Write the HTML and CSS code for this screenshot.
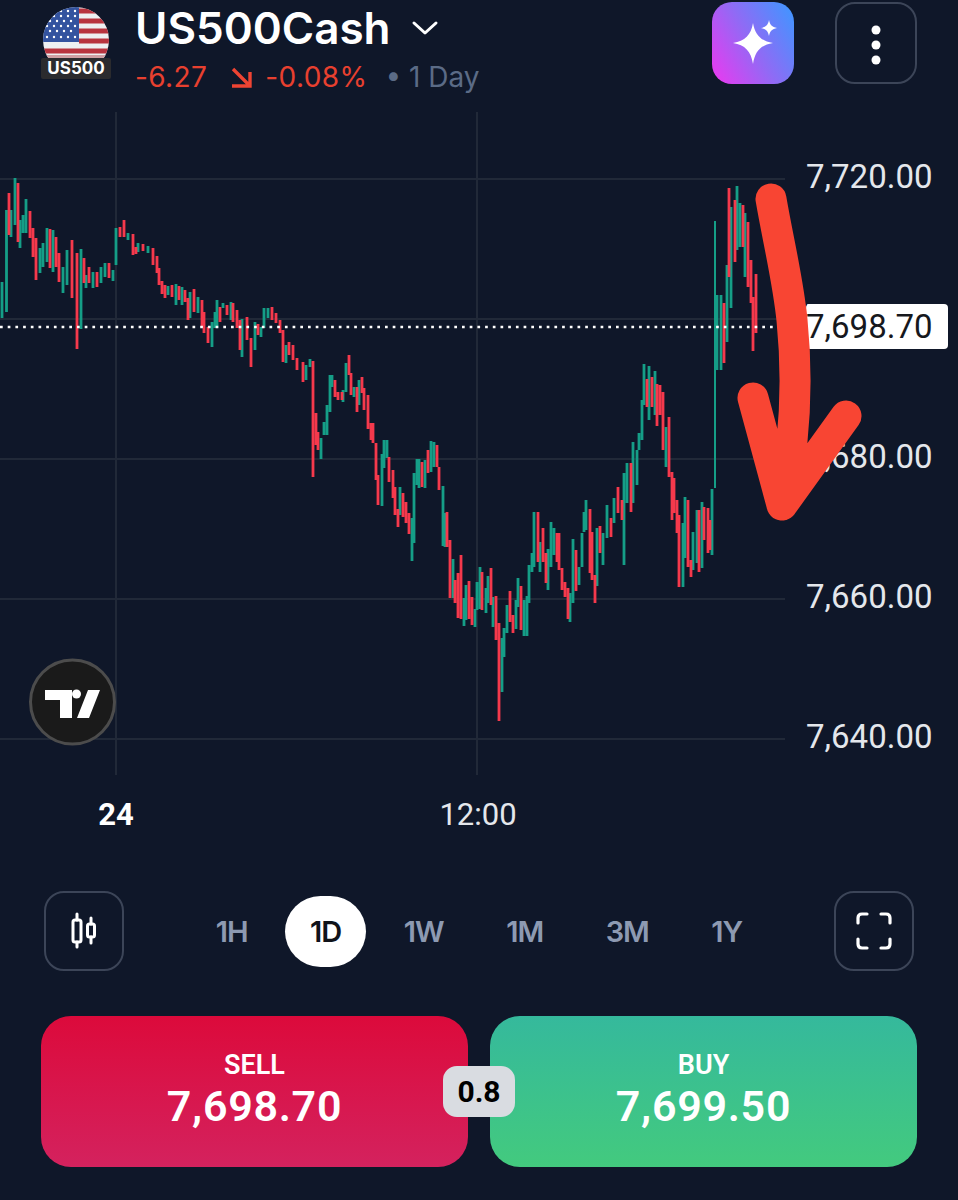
FILE: index.html
```html
<!DOCTYPE html>
<html>
<head>
    <title>US500Cash</title>
    <link rel="stylesheet" href="styles.css">
</head>
<body>
    <header class="top-bar">
        <div class="symbol-logo">
            <svg class="flag" width="66" height="51" viewBox="0 0 66 51">
                <defs><clipPath id="flagClip"><circle cx="33" cy="33" r="33"/></clipPath></defs>
                <g clip-path="url(#flagClip)">
                    <rect width="66" height="51" fill="#eef0f2"/>
                    <path d="M36 4H66M36 14H66M36 24H66M36 34H66M0 44H66" stroke="#b8343f" stroke-width="5"/>
                    <rect y="48" width="66" height="3" fill="#cfa0a4"/>
                    <rect width="36" height="35" fill="#33539f"/>
                    <g fill="#fff">
                        <circle cx="18" cy="4" r="1.2"/><circle cx="25" cy="4" r="1.2"/><circle cx="32" cy="4" r="1.2"/>
                        <circle cx="11" cy="9" r="1.2"/><circle cx="18" cy="9" r="1.2"/><circle cx="25" cy="9" r="1.2"/><circle cx="32" cy="9" r="1.2"/>
                        <circle cx="7" cy="14" r="1.2"/><circle cx="14" cy="14" r="1.2"/><circle cx="21" cy="14" r="1.2"/><circle cx="28" cy="14" r="1.2"/>
                        <circle cx="4" cy="19" r="1.2"/><circle cx="11" cy="19" r="1.2"/><circle cx="18" cy="19" r="1.2"/><circle cx="25" cy="19" r="1.2"/><circle cx="32" cy="19" r="1.2"/>
                        <circle cx="7" cy="24" r="1.2"/><circle cx="14" cy="24" r="1.2"/><circle cx="21" cy="24" r="1.2"/><circle cx="28" cy="24" r="1.2"/>
                        <circle cx="4" cy="30" r="1.2"/><circle cx="11" cy="30" r="1.2"/><circle cx="18" cy="30" r="1.2"/><circle cx="25" cy="30" r="1.2"/><circle cx="32" cy="30" r="1.2"/>
                    </g>
                </g>
            </svg>
            <span class="symbol-tag">US500</span>
        </div>
        <div class="symbol-info">
            <div class="symbol-name">
                <h1>US500Cash</h1>
                <svg width="28" height="16" viewBox="0 0 28 16"><path d="M3 3L14 13L25 3" fill="none" stroke="#fff" stroke-width="3" stroke-linecap="round" stroke-linejoin="round"/></svg>
            </div>
            <div class="symbol-change">
                <span class="down">-6.27</span>
                <svg class="down-arrow" width="22" height="22" viewBox="0 0 22 22"><path d="M3 3L19 19M2 20H20V6" fill="none" stroke="#ee4433" stroke-width="3.4"/></svg>
                <span class="down">-0.08%</span>
                <span class="period">&bull; 1 Day</span>
            </div>
        </div>
        <button class="square-btn ai-btn">
            <svg width="82" height="82" viewBox="0 0 82 82">
                <path d="M41 21C43 33 49 39 61 41C49 43 43 49 41 62C39 49 33 43 21 41C33 39 39 33 41 21Z" fill="#fff"/>
                <path d="M57 18C58 23 60 25 65 26C60 27 58 29 57 34C56 29 54 27 49 26C54 25 56 23 57 18Z" fill="#fff"/>
            </svg>
        </button>
        <button class="square-btn">
            <svg width="78" height="78" viewBox="0 0 78 78"><g fill="#fff"><circle cx="39" cy="26" r="4.5"/><circle cx="39" cy="41" r="4.5"/><circle cx="39" cy="56" r="4.5"/></g></svg>
        </button>
    </header>

    <section class="chart-row">
        <svg class="chart" width="785" height="663" viewBox="0 112 785 663">
            <path d="M0 179H785M0 319H785M0 459H785M0 599H785M0 739H785M116 112V775M477 112V775" stroke="#212938" stroke-width="2" fill="none"/>
            <path class="candles-up" d="M2 282V318M6.5 210V312M11 210V237M15 178V225M20 220V248M23 215V233M26 199V233M40 248V273M43 243V267M47 228V262M53 230V272M63 267V293M67 250V285M81 249V329M86 275V288M93 272V288M101 267V283M105 263V277M113 270V281M116 228V265M128 233V240M138 243V252M148 246V253M168 286V295M176 284V305M182 287V305M190 292V318M198 297V313M212 322V347M215 312V328M217 300V328M223 303V308M231 302V320M242 319V357M255 322V350M261 327V337M264 308V328M268 308V318M286 345V363M306 365V380M310 359V367M321 438V459M324 422V435M327 405V435M330 375V412M332 375V387M343 390V402M346 363V392M354 387V397M359 380V405M382 454V506M384 440V468M387 440V458M400 487V515M412 518V561M414 473V543M417 459V485M419 459V488M425 460V488M431 441V472M434 442V467M443 486V546M445 513V547M453 559V598M464 598V626M466 585V620M475 609V627M477 582V610M480 567V609M486 588V613M488 576V603M493 597V627M502 638V692M504 628V657M507 605V633M516 600V629M518 578V607M524 600V636M527 596V636M529 565V603M532 553V572M534 512V567M540 542V572M548 549V590M551 522V567M554 528V555M570 593V622M573 539V603M579 567V585M582 533V567M584 512V532M586 500V530M597 528V586M603 533V565M607 505V538M614 498V523M624 473V565M627 463V503M633 442V503M637 450V485M639 433V450M642 400V440M644 364V405M649 366V420M655 371V415M666 427V467M683 523V587M685 497V558M693 532V570M697 510V563M702 502V568M712 489V555M717 295V370M721 295V370M727 265V342M731 207V308M737 186V250M740 203V247M745 213V277"/>
            <path class="candles-up thin" d="M715 221V488"/>
            <path class="candles-down" d="M9 193V235M18 183V242M30 211V238M33 228V257M36 238V280M50 229V268M56 237V267M59 253V282M72 240V298M77 253V349M84 258V283M89 267V283M97 272V287M109 263V278M120 227V237M124 220V237M133 234V255M136 247V254M143 244V251M153 248V265M157 256V273M159 268V285M162 281V294M165 285V298M172 285V297M179 286V300M185 290V302M188 298V320M194 289V312M202 300V327M204 312V333M208 327V343M220 307V322M227 305V315M233 303V322M237 310V328M240 320V350M247 317V340M251 338V367M258 324V335M272 307V320M276 313V323M280 320V333M283 330V362M289 342V355M293 345V360M297 358V370M303 362V382M313 361V477M316 413V445M318 432V450M335 380V397M338 392V400M342 392V400M349 355V375M351 373V395M357 387V412M362 377V393M364 388V410M368 395V429M371 423V440M373 423V443M376 443V480M378 475V505M389 457V482M393 470V498M395 487V515M398 509V527M403 493V517M406 502V523M409 513V534M422 462V487M428 450V473M437 445V467M439 467V490M447 512V547M450 540V598M455 580V603M458 573V618M461 555V619M469 581V619M472 597V625M482 572V610M491 568V605M496 596V640M499 623V721M510 591V622M513 615V633M521 586V630M538 512V562M543 528V562M546 553V583M557 533V562M559 533V570M562 568V590M565 582V597M568 588V619M576 550V591M590 509V573M592 532V580M595 575V603M600 526V553M611 518V537M618 487V513M622 500V520M631 463V512M647 379V407M652 377V407M657 384V426M660 385V415M663 392V450M669 417V477M672 472V520M674 478V513M677 500V533M679 515V587M688 500V567M691 560V577M699 510V572M704 507V540M708 508V553M710 520V550M724 303V363M729 188V277M735 200V262M743 205V247M748 222V287M751 260V303M753 297V351M756 274V333"/>
            <path class="last-price" d="M0 327H785"/>
            <circle cx="72.5" cy="702" r="42" fill="#1a1a1a" stroke="#4c4c4c" stroke-width="3"/>
            <path d="M45 690H72V718H60V700H45ZM88 690H100L89 718H77Z" fill="#fff"/>
            <circle cx="76.5" cy="694" r="4.5" fill="#fff"/>
        </svg>
        <div class="price-axis">
            <span>7,720.00</span>
            <span>7,700.00</span>
            <span>7,680.00</span>
            <span>7,660.00</span>
            <span>7,640.00</span>
        </div>
        <span class="price-tag">7,698.70</span>
        <svg class="annotation" width="958" height="663" viewBox="0 112 958 663">
            <path d="M771 199C778 240 788 280 792 320C797 370 798 430 782 505M753 398L782 505L846 416" fill="none" stroke="#f84533" stroke-width="31" stroke-linecap="round" stroke-linejoin="round"/>
        </svg>
    </section>

    <div class="time-axis">
        <span class="time-day">24</span>
        <span class="time-hour">12:00</span>
    </div>

    <div class="toolbar">
        <button class="square-btn">
            <svg width="76" height="76" viewBox="0 0 76 76">
                <path d="M31 21V27M31 49V54M45 25V31M45 44V50" stroke="#fff" stroke-width="3" stroke-linecap="round"/>
                <rect x="27" y="27" width="8" height="22" rx="2" fill="none" stroke="#fff" stroke-width="3"/>
                <rect x="41.5" y="31" width="7" height="13" rx="2" fill="none" stroke="#fff" stroke-width="3"/>
            </svg>
        </button>
        <div class="ranges">
            <span class="range">1H</span>
            <span class="range active">1D</span>
            <span class="range">1W</span>
            <span class="range">1M</span>
            <span class="range">3M</span>
            <span class="range">1Y</span>
        </div>
        <button class="square-btn">
            <svg width="76" height="76" viewBox="0 0 76 76"><path d="M22 30V25Q22 21 26 21H31M45 21H50Q54 21 54 25V30M54 46V51Q54 55 50 55H45M31 55H26Q22 55 22 51V46" fill="none" stroke="#fff" stroke-width="3.2" stroke-linecap="round"/></svg>
        </button>
    </div>

    <div class="trade-row">
        <button class="trade sell"><span class="trade-label">SELL</span><span class="trade-price">7,698.70</span></button>
        <span class="spread">0.8</span>
        <button class="trade buy"><span class="trade-label">BUY</span><span class="trade-price">7,699.50</span></button>
    </div>
</body>
</html>
```

FILE: styles.css
```css
body {
    margin: 0;
    background: #0f1729;
    color: #fff;
    font-family: Inter, sans-serif;
    height: 1200px;
    overflow: hidden;
}
button {
    font-family: inherit;
    color: inherit;
    padding: 0;
    cursor: pointer;
}

/* header */
.top-bar {
    display: flex;
    align-items: flex-start;
    height: 112px;
    padding: 2px 41px 0;
    box-sizing: border-box;
}
.symbol-logo {
    display: flex;
    flex-direction: column;
    align-items: center;
    width: 70px;
    margin-top: 5px;
}
.flag {
    display: block;
}
.symbol-tag {
    background: #2b2b2e;
    font: 700 17px/21px Inter, sans-serif;
    width: 70px;
    text-align: center;
    border-radius: 2px;
}
.symbol-info {
    margin-left: 24px;
    flex: 1;
}
.symbol-name {
    display: flex;
    align-items: center;
    gap: 20px;
}
.symbol-name h1 {
    margin: 0;
    font-size: 44px;
    line-height: 52px;
    font-weight: 600;
}
.symbol-change {
    display: flex;
    align-items: center;
    margin-top: 7px;
    font-size: 28px;
    line-height: 32px;
}
.down {
    color: #e8402f;
    letter-spacing: 0.4px;
}
.down-arrow {
    margin: 0 13px 0 23px;
}
.period {
    color: #5b6b86;
    margin-left: 18px;
}
.square-btn {
    width: 82px;
    height: 82px;
    border: 2.5px solid #3c4558;
    border-radius: 20px;
    background: none;
    display: flex;
    align-items: center;
    justify-content: center;
    flex-shrink: 0;
    box-sizing: border-box;
}
.ai-btn {
    border: none;
    margin-right: 41px;
    background: linear-gradient(60deg, #e53cf0 5%, #8f6bf5 50%, #4394ff 95%);
}

/* chart */
.chart-row {
    position: relative;
    display: flex;
    height: 663px;
}
.chart {
    display: block;
    flex-shrink: 0;
}
.candles-up, .candles-down {
    fill: none;
    stroke-width: 2.8;
}
.candles-up {
    stroke: #159e87;
}
.candles-up.thin {
    stroke-width: 2;
}
.candles-down {
    stroke: #f5394c;
}
.last-price {
    stroke: #fff;
    stroke-width: 2.5;
    stroke-dasharray: 2.7 5;
    fill: none;
}
.price-axis {
    display: flex;
    flex-direction: column;
    margin-top: -5px;
    padding-left: 21px;
    font: 400 33px/140px Roboto, sans-serif;
    color: #e4e7ec;
}
.price-tag {
    position: absolute;
    left: 806px;
    top: 192px;
    width: 142px;
    height: 45px;
    background: #fff;
    border-radius: 4px;
    color: #16181d;
    font: 400 33px/45px Roboto, sans-serif;
}
.annotation {
    position: absolute;
    left: 0;
    top: 0;
}

/* time axis */
.time-axis {
    display: flex;
    height: 78px;
    align-items: center;
    font-family: Roboto, sans-serif;
    font-size: 31px;
}
.time-day {
    width: 76px;
    margin-left: 78px;
    text-align: center;
    font-weight: 700;
}
.time-hour {
    width: 100px;
    margin-left: 274px;
    text-align: center;
    color: #e4e7ec;
}

/* range buttons */
.toolbar {
    display: flex;
    align-items: center;
    justify-content: space-between;
    padding: 38px 44px 0;
}
.toolbar .square-btn {
    width: 80px;
    height: 80px;
}
.ranges {
    display: flex;
    gap: 12.5px;
}
.range {
    padding: 0 25px;
    height: 71px;
    font-size: 29px;
    font-weight: 600;
    letter-spacing: -1px;
    line-height: 71px;
    color: #8d9ab2;
    border-radius: 36px;
}
.range.active {
    background: #fff;
    color: #10131a;
}

/* sell / buy */
.trade-row {
    position: relative;
    display: flex;
    gap: 22px;
    padding: 45px 41px 0;
}
.trade {
    flex: 1;
    height: 151px;
    border: none;
    border-radius: 30px;
    display: flex;
    flex-direction: column;
    align-items: center;
    justify-content: center;
    padding-bottom: 3px;
    font-family: Roboto, sans-serif;
}
.sell {
    background: linear-gradient(#dc0a3b, #d4225e);
}
.buy {
    background: linear-gradient(#35b99c, #43ca7e);
}
.trade-label {
    font-size: 27px;
    font-weight: 600;
    line-height: 32px;
}
.trade-price {
    font-size: 43px;
    font-weight: 600;
    line-height: 50px;
    letter-spacing: 0.7px;
}
.spread {
    position: absolute;
    left: 443px;
    top: 95px;
    width: 72px;
    height: 51px;
    background: #d9dce1;
    border-radius: 14px;
    color: #000;
    font: 700 30px/51px Roboto, sans-serif;
    text-align: center;
}
```
